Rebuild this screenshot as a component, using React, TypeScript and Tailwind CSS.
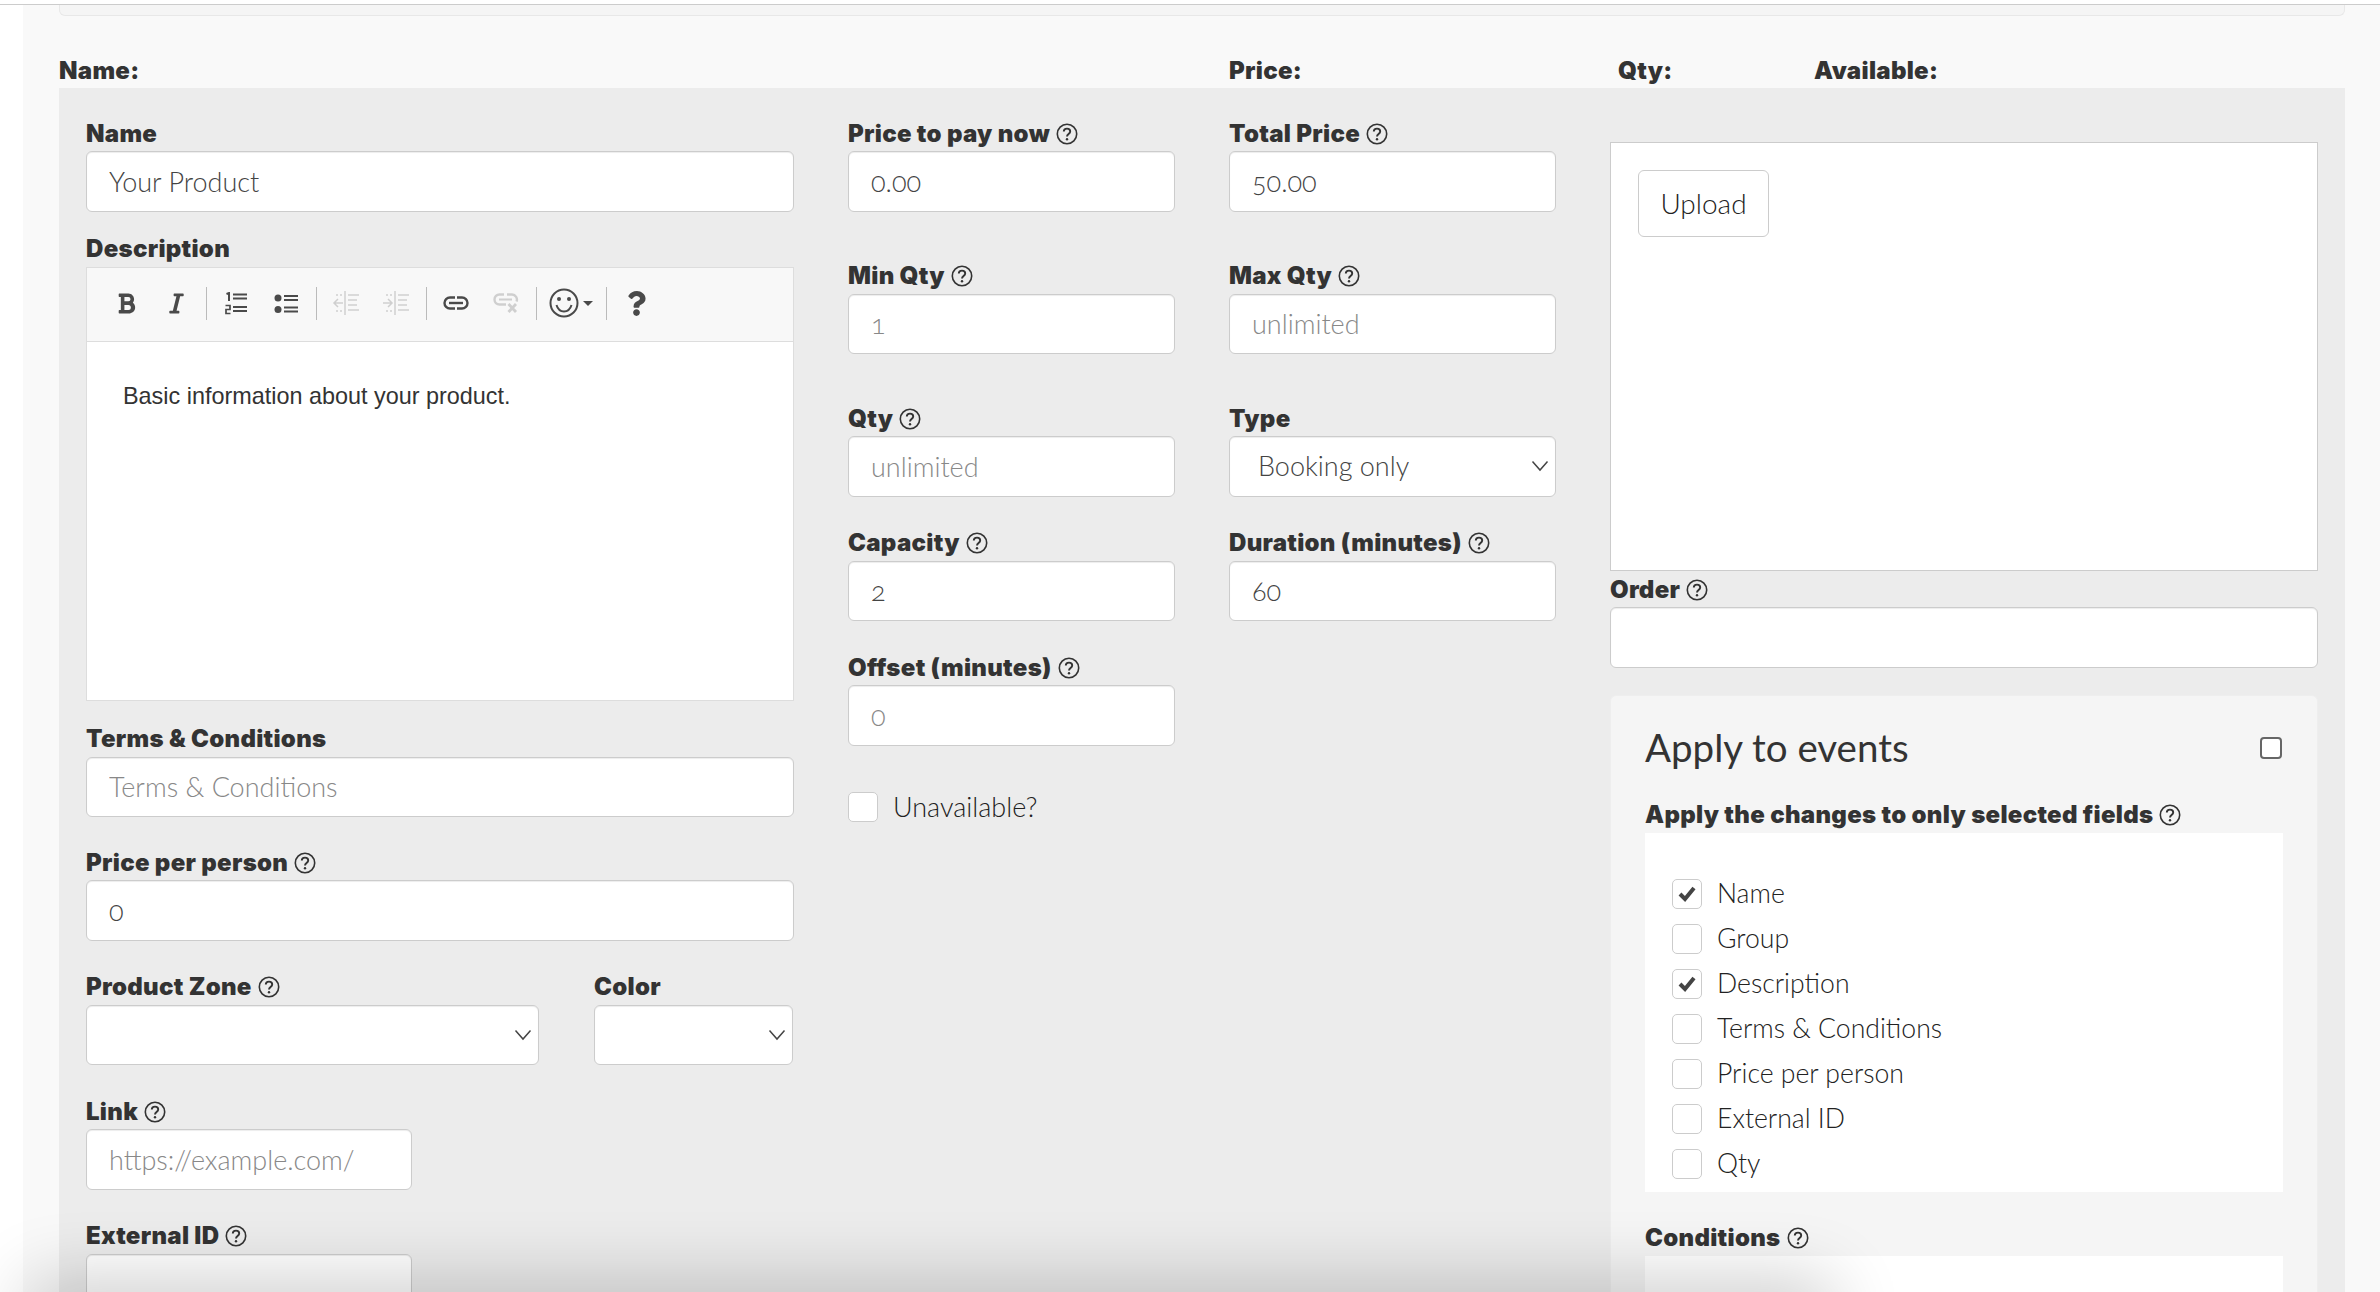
import React from "react";
import { FaBold, FaItalic, FaQuestion } from "react-icons/fa";

const Help = () => (
  <svg width="22" height="22" viewBox="0 0 22 22" fill="none" stroke="#333" className="ml-[6px] shrink-0">
    <circle cx="11" cy="11" r="9.7" strokeWidth="1.6" />
    <path d="M7.8 8.6c0-1.9 1.4-3 3.2-3s3.2 1.1 3.2 2.8c0 2.5-3.2 2.6-3.2 5" strokeWidth="1.9" />
    <circle cx="11" cy="16.2" r="1.2" fill="#333" stroke="none" />
  </svg>
);

const heavy = "font-['Inter','Liberation_Sans',sans-serif] text-[24px] font-black tracking-[0.3px] text-[#333]";

const Label = ({ text, help }: { text: string; help?: boolean }) => (
  <div className={`flex h-[36px] items-center pt-[1px] ${heavy}`}>
    <span>{text}</span>
    {help && <Help />}
  </div>
);

const inputCls =
  "block h-[60.5px] w-full rounded-[6px] border border-[#ccc] bg-white px-[22px] text-[27px] font-light text-[#444] [font-variant-numeric:oldstyle-nums] shadow-[inset_0_1px_1px_rgba(0,0,0,0.075)] outline-none placeholder:text-[#888]";

const Input = ({ value, placeholder }: { value?: string; placeholder?: string }) => (
  <input readOnly defaultValue={value} placeholder={placeholder} className={inputCls} />
);

const Field = ({
  label,
  help,
  value,
  placeholder,
  className,
  children,
}: {
  label: string;
  help?: boolean;
  value?: string;
  placeholder?: string;
  className?: string;
  children?: React.ReactNode;
}) => (
  <div className={className}>
    <Label text={label} help={help} />
    {children ?? <Input value={value} placeholder={placeholder} />}
  </div>
);

const Select = ({ value }: { value?: string }) => (
  <div className="flex h-[60.5px] w-full items-center justify-between rounded-[6px] border border-[#ccc] bg-white pl-[28px] pr-[6px] text-[27px] font-light text-[#444] shadow-[inset_0_1px_1px_rgba(0,0,0,0.075)]">
    <span>{value}</span>
    <svg width="18" height="12" viewBox="0 0 18 12" fill="none" stroke="#444" strokeWidth="1.5">
      <path d="M1.5 1.5 9 10l7.5-8.5" />
    </svg>
  </div>
);

const Check = ({ checked }: { checked?: boolean }) => (
  <span className="flex h-[30px] w-[30px] shrink-0 items-center justify-center rounded-[5px] border border-[#ccc] bg-white">
    {checked && (
      <svg width="18" height="16" viewBox="0 0 18 16" fill="none" stroke="#444" strokeWidth="4">
        <path d="M2 8l5 5 9-11" />
      </svg>
    )}
  </span>
);

const Sep = () => <span className="ml-[5px] mr-[4px] h-[33px] w-px bg-[#bbb]" />;
const Tool = ({ children }: { children: React.ReactNode }) => (
  <span className="flex w-[50px] items-center justify-center">{children}</span>
);

const Lines = ({ color, arrow }: { color: string; arrow: "in" | "out" }) => (
  <svg width="28" height="26" viewBox="0 0 28 26" fill="none" stroke={color} strokeWidth="1.5">
    <path d="M13 1v24M16 5h11M16 10h9M16 15h9M16 20h11" />
    <path d={arrow === "out" ? "M11 13H2M6 9l-4 4 4 4" : "M1 13h9M6 9l4 4-4 4"} />
    <path d="M4 5h2M8 5h2M4 21h2M8 21h2" />
  </svg>
);

const Toolbar = () => (
  <div className="flex h-[74px] items-center border-b border-[#ddd] bg-[#f8f8f8] pb-[2px] pl-[14px]">
    <Tool><FaBold size={23} color="#4a4a4a" /></Tool>
    <Tool><FaItalic size={23} color="#4a4a4a" /></Tool>
    <Sep />
    <Tool>
      <svg width="22" height="23" viewBox="0 0 22 23" fill="none" stroke="#4a4a4a" strokeWidth="2">
        <path d="M1.500 2l2.500-1v8" />
        <path d="M0.500 13.500h4.500v4h-4v4h4.500" strokeWidth="1.700" />
        <path d="M8 2.500h14M8 6.500h14M8 15h14M8 19h14" />
      </svg>
    </Tool>
    <Tool>
      <svg width="24" height="19" viewBox="0 0 24 19" fill="none" stroke="#4a4a4a" strokeWidth="2">
        <circle cx="4" cy="4" r="3.500" fill="#4a4a4a" stroke="none" />
        <circle cx="4" cy="15.500" r="3.500" fill="#4a4a4a" stroke="none" />
        <path d="M10 2h14M10 6h14M10 13.500h14M10 17.500h14" />
      </svg>
    </Tool>
    <Sep />
    <Tool><Lines color="#cfcfcf" arrow="out" /></Tool>
    <Tool><Lines color="#cfcfcf" arrow="in" /></Tool>
    <Sep />
    <Tool>
      <svg width="26" height="14" viewBox="0 0 26 14" fill="none" stroke="#4a4a4a" strokeWidth="2.400">
        <path d="M12 1.500H7a5.500 5.500 0 0 0 0 11h5M14 1.500h5a5.500 5.500 0 0 1 0 11h-5" />
        <path d="M6 7h14" strokeWidth="2.400" />
      </svg>
    </Tool>
    <Tool>
      <svg width="26" height="20" viewBox="0 0 26 20" fill="none" stroke="#cfcfcf" strokeWidth="2.400">
        <path d="M11 1.500H6.500a5 5 0 0 0 0 10H13M14 1.500h5a5 5 0 0 1 4.500 7" />
        <path d="M6 6.500h13" strokeWidth="2" />
        <path d="M15.500 11l7.500 8M23 11l-7.500 8" strokeWidth="2.800" />
      </svg>
    </Tool>
    <Sep />
    <span className="flex w-[60px] items-center justify-start gap-[4px] pl-[8px]">
      <svg width="30" height="30" viewBox="0 0 30 30" fill="none" stroke="#4a4a4a" strokeWidth="2" className="shrink-0">
        <circle cx="15" cy="15" r="13.500" />
        <path d="M7.500 17c1.500 5 4.500 6.500 7.500 6.500s6-1.500 7.500-6.500" />
        <circle cx="10" cy="11" r="2" fill="#4a4a4a" stroke="none" />
        <circle cx="20" cy="11" r="2" fill="#4a4a4a" stroke="none" />
      </svg>
      <span className="h-0 w-0 border-x-[5px] border-t-[5px] border-x-transparent border-t-[#4a4a4a]" />
    </span>
    <Sep />
    <Tool><FaQuestion size={25} color="#4a4a4a" /></Tool>
  </div>
);

const fields = [
  ["Name", true],
  ["Group", false],
  ["Description", true],
  ["Terms & Conditions", false],
  ["Price per person", false],
  ["External ID", false],
  ["Qty", false],
] as const;

export default function App() {
  return (
    <div className="relative h-[1292px] overflow-hidden bg-white pt-[4px] font-['Lato','Liberation_Sans',sans-serif]">
      <div className="h-px bg-[#ccc]" />
      <div className="ml-[23px] h-[1287px] bg-[#f9f9f9]">
        <div className="ml-[36px] h-[11px] w-[2286px] rounded-b-[6px] border border-t-0 border-[#e8e8e8] bg-[#f5f5f5]" />
        <div className={`ml-[36px] flex h-[72px] items-end leading-[36px] ${heavy}`}>
          <div className="flex h-[36px] w-full items-start pt-[1px]">
            <span className="w-[1170px]">Name:</span>
            <span className="w-[389px]">Price:</span>
            <span className="w-[196px]">Qty:</span>
            <span>Available:</span>
          </div>
        </div>
        <div className="ml-[36px] grid h-[1204px] w-[2286px] grid-cols-6 bg-[#ececec] pt-[27px]">
          <div className="col-span-2 px-[27px]">
            <Field label="Name" value="Your Product" />
            <Field label="Description" className="mt-[19px]">
              <div className="h-[434px] border border-[#ddd] bg-white">
                <Toolbar />
                <p className="px-[36px] pt-[37px] font-['Liberation_Sans',sans-serif] text-[23.4px] leading-[34px] text-[#333]">
                  Basic information about your product.
                </p>
              </div>
            </Field>
            <Field label="Terms & Conditions" placeholder="Terms & Conditions" className="mt-[20px]" />
            <Field label="Price per person" help value="0" className="mt-[27px]" />
            <div className="mt-[28px] flex gap-[55px]">
              <Field label="Product Zone" help className="w-[453px]"><Select /></Field>
              <Field label="Color" className="w-[199px]"><Select /></Field>
            </div>
            <Field label="Link" help placeholder="https://example.com/" className="mt-[28px] w-[326px]" />
            <Field label="External ID" help className="mt-[28px] w-[326px]" />
          </div>

          <div className="px-[27px]">
            <Field label="Price to pay now" help value="0.00" />
            <Field label="Min Qty" help placeholder="1" className="mt-[46px]" />
            <Field label="Qty" help placeholder="unlimited" className="mt-[46px]" />
            <Field label="Capacity" help value="2" className="mt-[28px]" />
            <Field label="Offset (minutes)" help placeholder="0" className="mt-[28px]" />
            <label className="mt-[41px] flex items-center gap-[15px] text-[27px] font-light text-[#222]">
              <Check />
              Unavailable?
            </label>
          </div>

          <div className="px-[27px]">
            <Field label="Total Price" help value="50.00" />
            <Field label="Max Qty" help placeholder="unlimited" className="mt-[46px]" />
            <Field label="Type" className="mt-[46px]"><Select value="Booking only" /></Field>
            <Field label="Duration (minutes)" help value="60" className="mt-[28px]" />
          </div>

          <div className="col-span-2 px-[27px]">
            <div className="mt-[27px] h-[429px] border border-[#ccc] bg-white pl-[27px] pt-[27px]">
              <button className="h-[67px] w-[131px] rounded-[6px] border border-[#ccc] bg-white pb-[2px] text-[28px] font-light text-[#222]">
                Upload
              </button>
            </div>
            <Field label="Order" help />
            <div className="mt-[27px] rounded-[6px] border border-[#eee] bg-[#f5f5f5] px-[34px] pt-[25px]">
              <div className="flex h-[54px] items-center justify-between pr-[1px]">
                <span className="text-[38.5px] font-normal text-[#333]">Apply to events</span>
                <span className="h-[22px] w-[22px] rounded-[4px] border-2 border-[#666] bg-white" />
              </div>
              <div className="mt-[22px]">
                <Label text="Apply the changes to only selected fields" help />
              </div>
              <div className="h-[359px] bg-white pl-[27px] pt-[46px]">
                {fields.map(([name, checked]) => (
                  <div key={name} className="mb-[15px] flex h-[30px] items-center gap-[15px] text-[26.6px] font-light text-[#222]">
                    <Check checked={checked} />
                    {name}
                  </div>
                ))}
              </div>
              <div className="mt-[28px]">
                <Label text="Conditions" help />
              </div>
              <div className="h-[100px] bg-white" />
            </div>
          </div>
        </div>
      </div>
      <div className="pointer-events-none absolute bottom-[-50px] left-[40px] h-[50px] w-[1780px] shadow-[0_0_70px_12px_rgba(0,0,0,0.2)]" />
    </div>
  );
}
